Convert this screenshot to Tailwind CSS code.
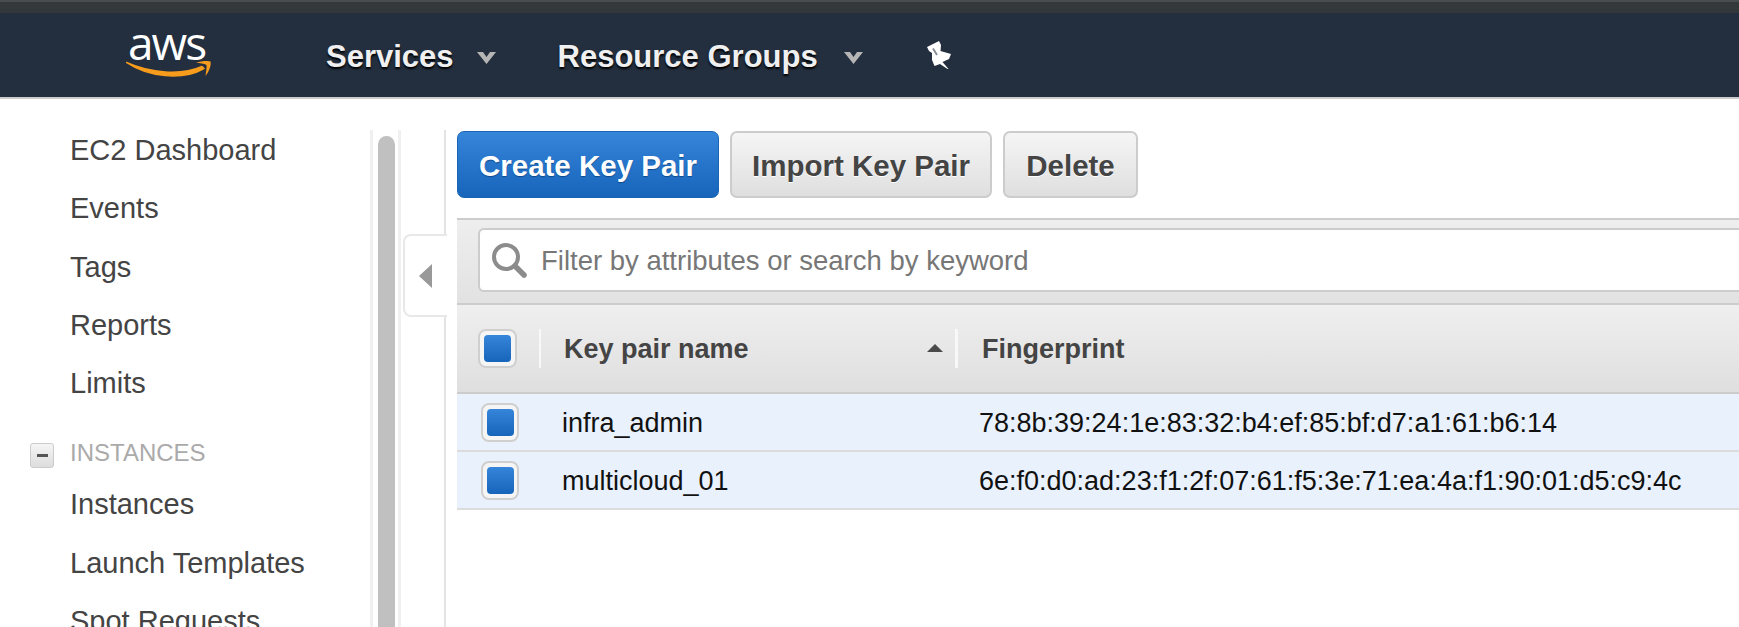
<!DOCTYPE html>
<html lang="en">
<head>
  <meta charset="UTF-8">
  <meta name="viewport" content="width=device-width, initial-scale=1.0">
  <title>Key Pairs</title>
  <script src="https://cdn.jsdelivr.net/npm/@tailwindcss/browser@4"></script>
</head>
<body class="h-[627px] w-[1739px] overflow-hidden bg-white font-['Liberation_Sans',Arial,sans-serif]">

  <!-- top bars -->
  <div class="h-[13px] border-t-2 border-[#4a4d50] bg-[#33383b]"></div>
  <header class="flex h-[86px] items-center border-b-2 border-[#cccccc] bg-[#232f3e] text-[31px] font-bold text-[#f0f0f0] [text-shadow:0_2px_2px_#000]">
    <div class="relative ml-[126px] h-[84px] w-[85px] shrink-0">
      <span class="absolute left-[2px] top-[1px] font-['Open_Sans',sans-serif] text-[46px] font-normal leading-[56px] tracking-[-2px] text-white [text-shadow:none]">aws</span>
      <svg class="absolute left-0 top-[47px]" width="86" height="22" viewBox="0 0 86 22">
        <path d="M0.5 2.5C22 17 56 21 78 8.5L76 6.5C55 16 24 13 0.5 2.5Z" fill="#f79c1c" stroke="#f79c1c" stroke-width="1.5" stroke-linejoin="round"/>
        <path d="M70 2.5C75 1 82 0.5 84.5 1.5C85.5 5 83 12 79.5 16C80 11 81 7 80.5 5C78 3.5 74 3 70 2.5Z" fill="#f79c1c"/>
      </svg>
    </div>
    <span class="ml-[115px] mt-[5px]">Services</span>
    <svg class="ml-[23px] mt-[6px]" width="19" height="12" viewBox="0 0 19 12"><path d="M0 0H6L9.5 5L13 0H19L9.5 12Z" fill="#b5b5b5"/></svg>
    <span class="ml-[62px] mt-[5px]">Resource Groups</span>
    <svg class="ml-[26px] mt-[6px]" width="19" height="12" viewBox="0 0 19 12"><path d="M0 0H6L9.5 5L13 0H19L9.5 12Z" fill="#b5b5b5"/></svg>
    <svg class="ml-[63px]" width="26" height="28" viewBox="0 0 26 28">
      <path d="M1 6L13 0L15 4L14.5 10L25 13L23 18L16.5 21L22.5 28L21.5 28L14 23L8.5 25L6 19L6 12L3 10Z" fill="#ffffff"/>
      <path d="M7 7.5L11 14" stroke="#8a8f96" stroke-width="2"/>
    </svg>
  </header>

  <div class="flex h-[528px]">
    <!-- sidebar -->
    <aside class="w-[370px] shrink-0 overflow-hidden pt-[22px] text-[29px] leading-[58.3px] text-[#444444]">
      <div class="pl-[70px]">EC2 Dashboard</div>
      <div class="pl-[70px]">Events</div>
      <div class="pl-[70px]">Tags</div>
      <div class="pl-[70px]">Reports</div>
      <div class="pl-[70px]">Limits</div>
      <div class="mt-[18px] flex h-[45px] items-center text-[24px] text-[#aaaaaa]">
        <span class="ml-[30px] mr-[16px] mt-[6px] flex h-[25px] w-[24px] items-center justify-center rounded-[3px] border border-[#cccccc] bg-gradient-to-b from-[#f5f5f5] to-[#dddddd]">
          <span class="h-[3px] w-[11px] bg-[#555555]"></span>
        </span>
        INSTANCES
      </div>
      <div class="pl-[70px]">Instances</div>
      <div class="pl-[70px]">Launch Templates</div>
      <div class="pl-[70px]">Spot Requests</div>
    </aside>

    <!-- scrollbar -->
    <div class="w-[31px] shrink-0 pt-[31px]">
      <div class="h-[500px] border-x-[3px] border-[#f0f0f0] bg-white pl-[5px] pt-[6px]">
        <div class="h-[500px] w-[17px] rounded-t-[9px] bg-[#c0c0c0]"></div>
      </div>
    </div>

    <!-- collapse handle -->
    <div class="relative w-[45px] shrink-0 pt-[31px]">
      <div class="ml-auto h-[500px] w-[2px] bg-[#e4e4e4]"></div>
      <div class="absolute left-[2px] top-[135px] flex h-[83px] w-[44px] items-center rounded-l-[8px] border-y-2 border-l-2 border-[#e8e8e8] bg-white pl-[14px]">
        <svg width="13" height="24" viewBox="0 0 13 24"><path d="M13 0V24L0 12Z" fill="#999999"/></svg>
      </div>
    </div>

    <!-- content -->
    <main class="ml-[11px] min-w-0 flex-1 pt-[32px]">
      <div class="flex gap-[11px] text-[29.5px] font-bold">
        <button class="h-[67px] w-[262px] rounded-[7px] border border-[#1a66b5] bg-gradient-to-b from-[#3585db] to-[#1665bb] pt-[4px] text-white [text-shadow:0_1px_1px_#0f4a8a]">Create Key Pair</button>
        <button class="h-[67px] w-[262px] rounded-[7px] border-2 border-[#cccccc] bg-gradient-to-b from-[#f5f5f5] to-[#dfdfdf] pt-[4px] text-[#444444] [text-shadow:0_1px_0_#ffffff]">Import Key Pair</button>
        <button class="h-[67px] w-[135px] rounded-[7px] border-2 border-[#cccccc] bg-gradient-to-b from-[#f5f5f5] to-[#dfdfdf] pt-[4px] text-[#444444] [text-shadow:0_1px_0_#ffffff]">Delete</button>
      </div>

      <!-- filter -->
      <div class="mt-[20px] h-[87px] border-y-2 border-[#cccccc] bg-gradient-to-b from-[#eeeeee] to-[#e2e2e2] pl-[21px] pt-[8px]">
        <div class="flex h-[64px] items-center rounded-l-[6px] border-2 border-r-0 border-[#cccccc] bg-white pl-[11px] text-[27.5px] text-[#777777]">
          <svg class="mr-[14px]" width="36" height="36" viewBox="0 0 36 36" fill="none" stroke="#8c8c8c"><circle cx="15" cy="15" r="12" stroke-width="4"/><path d="M24 24L33 33" stroke-width="5.5" stroke-linecap="round"/></svg>
          <span class="pt-[2px]">Filter by attributes or search by keyword</span>
        </div>
      </div>

      <!-- table header -->
      <div class="flex h-[89px] items-center border-b-2 border-[#cccccc] bg-gradient-to-b from-[#efefef] to-[#dfdfdf] text-[27px] font-bold text-[#444444]">
        <span class="ml-[21px] flex h-[39px] w-[39px] items-center justify-center rounded-[8px] border-2 border-[#cfcfcf] bg-[#f5f5f5]">
          <span class="h-[27px] w-[27px] rounded-[4px] bg-gradient-to-b from-[#3585db] to-[#1665bb]"></span>
        </span>
        <span class="ml-[22px] h-[39px] w-[2px] bg-[#f8f8f8]"></span>
        <span class="ml-[23px] w-[363px] pt-[2px]">Key pair name</span>
        <svg class="-mt-[2px]" width="16" height="8" viewBox="0 0 16 8"><path d="M8 0L16 8H0Z" fill="#4a4a4a"/></svg>
        <span class="ml-[12px] h-[39px] w-[3px] bg-[#f8f8f8]"></span>
        <span class="ml-[24px] pt-[2px]">Fingerprint</span>
      </div>

      <!-- rows -->
      <div class="flex h-[58px] items-center border-b-2 border-[#dcdcdc] bg-[#e9f1fc] text-[27px] text-[#111111]">
        <span class="ml-[24px] flex h-[39px] w-[38px] items-center justify-center rounded-[8px] border-2 border-[#cfcfcf] bg-[#f5f5f5]">
          <span class="h-[27px] w-[27px] rounded-[4px] bg-gradient-to-b from-[#3585db] to-[#1665bb]"></span>
        </span>
        <span class="ml-[43px] w-[417px] pt-[2px]">infra_admin</span>
        <span class="pt-[2px]">78:8b:39:24:1e:83:32:b4:ef:85:bf:d7:a1:61:b6:14</span>
      </div>
      <div class="flex h-[58px] items-center border-b-2 border-[#dcdcdc] bg-[#e9f1fc] text-[27px] text-[#111111]">
        <span class="ml-[24px] flex h-[39px] w-[38px] items-center justify-center rounded-[8px] border-2 border-[#cfcfcf] bg-[#f5f5f5]">
          <span class="h-[27px] w-[27px] rounded-[4px] bg-gradient-to-b from-[#3585db] to-[#1665bb]"></span>
        </span>
        <span class="ml-[43px] w-[417px] pt-[2px]">multicloud_01</span>
        <span class="pt-[2px]">6e:f0:d0:ad:23:f1:2f:07:61:f5:3e:71:ea:4a:f1:90:01:d5:c9:4c</span>
      </div>
    </main>
  </div>

</body>
</html>
